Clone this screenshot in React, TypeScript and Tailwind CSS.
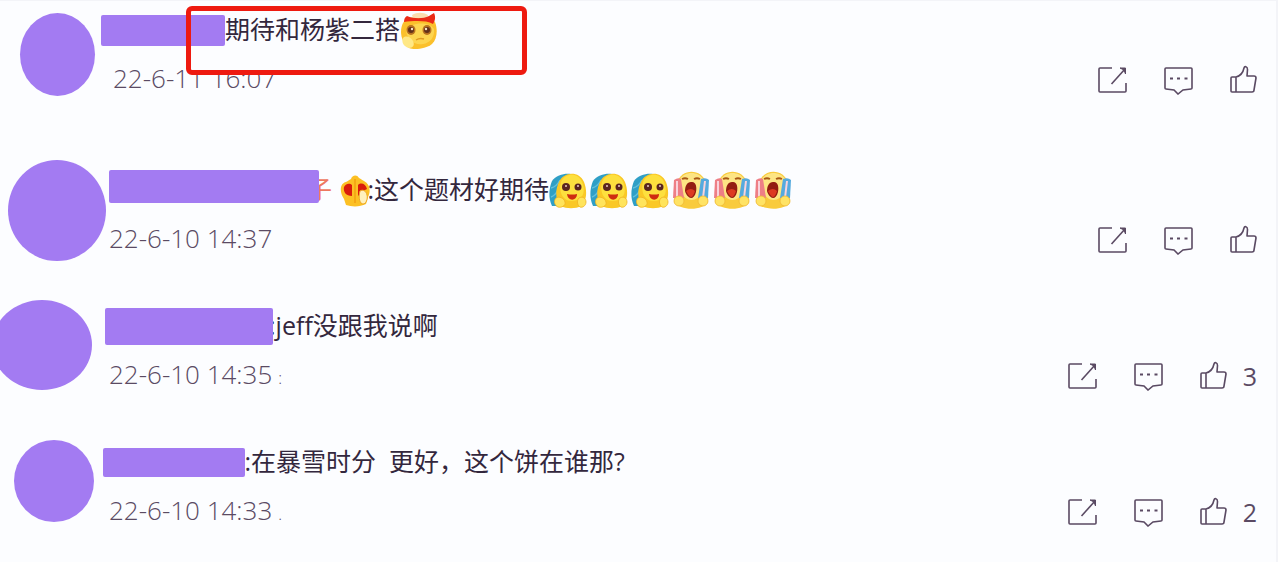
import type { ReactNode } from "react";

interface Comment {
  id: number;
  avatar: string;
  column: string;
  mask: string;
  date: string;
  dateIndent: string;
  name?: ReactNode;
  text: string;
  emojis: ReactNode[];
  trail?: string;
  likes?: number;
  highlighted?: boolean;
}

function HeadbandFace() {
  return (
    <svg viewBox="0 0 38 38" className="size-[38px] shrink-0" aria-hidden="true">
      <path d="M3 12C8 4 29 4 35 11c3 8 2 17-3 22-6 5-18 6-23 4C1 31-1 20 3 12Z" fill="#fbc02c" />
      <path d="M6 20c4-9 23-10 28-2 1 8-4 14-11 15-8 2-16-5-17-13Z" fill="#fdd550" />
      <path d="M12 4c5-3 11-3 16 0l-1 3H13Z" fill="#fbdcae" />
      <path d="M4 11c0-3 1-5 3-6 7 3 16 3 22 0l5-3c2 4 1 8-1 11-7-4-20-3-29-2Z" fill="#ea2a16" />
      <ellipse cx="11" cy="19" rx="4.500" ry="5" fill="#b8711f" />
      <ellipse cx="27" cy="19" rx="4.500" ry="5" fill="#b8711f" />
      <circle cx="11" cy="19" r="3" fill="#62301a" />
      <circle cx="27" cy="19" r="3" fill="#62301a" />
      <circle cx="12" cy="18" r="1.200" fill="#f9e4c8" />
      <circle cx="26" cy="18" r="1.200" fill="#f9e4c8" />
      <path d="M16 29c3-2 5-2 8-1" stroke="#e09a20" strokeWidth="1.500" fill="none" />
      <path d="M3 27c3-3 8-1 10 3s0 7-4 7c-5-1-8-6-6-10Z" fill="#ffe886" />
    </svg>
  );
}

function HeartHands() {
  return (
    <svg viewBox="0 0 30 33" className="h-[33px] w-[30px] shrink-0" aria-hidden="true">
      <path d="M4 25C-1 18 0 9 6 8c2-1 3-2 5-3 1-4 6-5 8-1 2 1 3 2 5 3 6 3 7 10 4 16l-2 7c-6 3-14 3-20 1Z" fill="#fcc024" />
      <path d="M12 11v11C6 22 3 18 4 13c2-4 6-4 8-2Z" fill="#d91c0b" />
      <path d="M18 11c3-3 8-1 9 4l-4 2-5 5Z" fill="#d91c0b" />
      <path d="M15 5v24" stroke="#f5a716" strokeWidth="2" fill="none" />
      <path d="M20 17c3-2 6 0 7 4s-1 9-4 9-5-6-3-13Z" fill="#fff1bd" stroke="#efaa25" />
    </svg>
  );
}

function HopefulFace() {
  return (
    <svg viewBox="0 0 38 38" className="size-[38px] shrink-0" aria-hidden="true">
      <path d="M3 10C7 4 16 2 22 3L16 35H3C-1 27 0 17 3 10Z" fill="#2f9fc6" />
      <path d="M2 17c4-1 7-4 9-8M2 26c3-1 5-3 7-7" stroke="#63bfda" strokeWidth="1.500" fill="none" />
      <path d="M10 11C14 1 30-1 35 11c4 10 2 20-3 24-5 3-15 3-20 0C6 29 6 19 10 11Z" fill="#fac827" />
      <path d="M12 11C16 2 29 1 33 11c4 9 1 16-5 18-8 3-14-1-16-7-1-4-1-7 0-11Z" fill="#fde03e" />
      <circle cx="17" cy="16" r="4" fill="#5a2520" />
      <circle cx="29" cy="16" r="3.500" fill="#5a2520" />
      <circle cx="17" cy="15" r="1" fill="#e9c9c4" />
      <circle cx="29" cy="15" r="1" fill="#e9c9c4" />
      <path d="M18 23q5 1 10 0c0 7-9 8-10 0Z" fill="#cf2c10" />
      <path d="M7 27c3-2 8 0 9 4s-4 6-7 5-5-6-2-9Z" fill="#ffe45c" stroke="#efb321" strokeWidth="0.800" />
      <path d="M30 27c3-2 7 0 7 4s-4 6-6 5-4-6-1-9Z" fill="#ffe45c" stroke="#efb321" strokeWidth="0.800" />
    </svg>
  );
}

function ScreamingFace() {
  return (
    <svg viewBox="0 0 38 38" className="size-[38px] shrink-0" aria-hidden="true">
      <path d="M5 12C9-3 30-3 34 12l2 19c-5 9-28 9-34 0Z" fill="#f9cb3c" />
      <path d="M8 8c5-8 18-8 23 0l-1 12c-4 12-17 12-21 0Z" fill="#fde584" />
      <path d="M2 9q4-3 7-1l3 19H1Z" fill="#ee7f86" />
      <path d="M29 8q5-2 8 1l-1 18H26Z" fill="#55aade" />
      <path d="M5 10v17M33 10l-2 17" stroke="#f9d3dc" strokeWidth="2" />
      <path d="M10 8c2-1 4-1 6 0M22 8c2-1 4-1 6 0" stroke="#a95916" strokeWidth="1.800" fill="none" />
      <path d="M19 11c5-1 6 5 5 10-1 4-3 6-5 6s-5-3-6-7c0-5 2-9 6-9Z" fill="#931d12" />
      <path d="M14 20q5-4 9 0-2 6-4 6t-5-6Z" fill="#dc3a22" />
      <circle cx="7" cy="30" r="5" fill="#ffe365" stroke="#efb833" strokeWidth="0.800" />
      <circle cx="31" cy="30" r="5" fill="#ffe365" stroke="#efb833" strokeWidth="0.800" />
    </svg>
  );
}

function ShareIcon() {
  return (
    <svg viewBox="0 0 30 30" className="size-[30px]" fill="none" stroke="currentColor" strokeWidth="1.600">
      <path d="M15 3H3q-1 0-1 1v22q0 1 1 1h25q1 0 1-1v-8" />
      <path d="M14.500 19 28 4" />
      <path d="M23 3h5.500v6L27 5Z" fill="currentColor" strokeWidth="1" />
    </svg>
  );
}

function ReplyIcon() {
  return (
    <svg viewBox="0 0 30 30" className="size-[30px]" fill="none" stroke="currentColor" strokeWidth="1.600">
      <path d="M3 3h25q1 0 1 1v19q0 1-1 1l-8 1-5 4-4-4-8-1q-1 0-1-1V4q0-1 1-1Z" />
      <path d="M7 13.500h3M14 13.500h3M21.500 13.500h3" strokeWidth="2" />
    </svg>
  );
}

function LikeIcon() {
  return (
    <svg viewBox="0 0 28 30" className="h-[30px] w-[28px]" fill="none" stroke="currentColor" strokeWidth="1.600" strokeLinejoin="round">
      <path d="M3 12q-1 0-1 1v13q0 1 1 1h4V12ZM7 12c4-1 7-4 8-9 .5-2 3.500-2 3.500 1.500L18 11h7q2 0 2 2l-2 12q0 2-2 2H7" />
    </svg>
  );
}

const comments: Comment[] = [
  {
    id: 1,
    avatar: "ml-5 mt-[13px] h-[83px] w-[75px]",
    column: "w-[101px]",
    mask: "h-[31px] w-[124px]",
    date: "22-6-11 16:07",
    dateIndent: "pl-3",
    text: "期待和杨紫二搭",
    emojis: [<HeadbandFace key="a" />],
    highlighted: true,
  },
  {
    id: 2,
    avatar: "ml-2 h-[101px] w-[98px]",
    column: "w-[109px]",
    mask: "mb-2 h-[33px] w-[210px]",
    date: "22-6-10 14:37",
    dateIndent: "pl-0",
    name: (
      <>
        <span className="-ml-3 mr-2 text-[#ee7860]">子</span>
        <HeartHands />
        <span className="flex w-1 justify-end">:</span>
      </>
    ),
    text: "这个题材好期待",
    emojis: [
      <HopefulFace key="a" />,
      <HopefulFace key="b" />,
      <HopefulFace key="c" />,
      <ScreamingFace key="d" />,
      <ScreamingFace key="e" />,
      <ScreamingFace key="f" />,
    ],
  },
  {
    id: 3,
    avatar: "-ml-2 mt-1 h-[90px] w-[100px]",
    column: "w-[105px]",
    mask: "h-[37px] w-[168px]",
    date: "22-6-10 14:35",
    dateIndent: "pl-1",
    name: <span className="-ml-1">:</span>,
    text: "jeff没跟我说啊",
    emojis: [],
    trail: ":",
    likes: 3,
  },
  {
    id: 4,
    avatar: "ml-[14px] mt-2 h-[82px] w-[80px]",
    column: "w-[103px]",
    mask: "h-[29px] w-[142px]",
    date: "22-6-10 14:33",
    dateIndent: "pl-1.5",
    name: <span className="flex w-1.5 justify-end">:</span>,
    text: "在暴雪时分  更好，这个饼在谁那?",
    emojis: [],
    trail: ".",
    likes: 2,
  },
];

function CommentRow({ comment }: { comment: Comment }) {
  return (
    <li className={comment.highlighted ? "relative flex h-40" : "flex h-[136px]"}>
      <div className={`shrink-0 ${comment.column}`}>
        <div className={`rounded-[50%] bg-[#a37bf2] ${comment.avatar}`} />
      </div>
      <div className="flex-1">
        <div className="flex h-[60px] items-center whitespace-pre text-[25px] font-normal text-[#33273d]">
          <div className={`z-10 shrink-0 rounded-xs bg-[#a37bf2] ${comment.mask}`} />
          {comment.name}
          <p>{comment.text}</p>
          <div className="flex gap-[3px]">{comment.emojis}</div>
        </div>
        <div className="flex h-10 items-center text-[#5a4a63]">
          <time className={`pb-1 text-[26px] ${comment.dateIndent}`}>{comment.date}</time>
          {comment.trail && <span className="pl-1.5 pt-1 text-base">{comment.trail}</span>}
          <div className="ml-auto flex items-center gap-9 pr-[19px]">
            <button type="button" aria-label="转发">
              <ShareIcon />
            </button>
            <button type="button" aria-label="回复">
              <ReplyIcon />
            </button>
            <button type="button" aria-label="赞" className="flex items-center gap-4">
              <LikeIcon />
              {comment.likes && <span className="text-[25px] font-normal leading-[30px]">{comment.likes}</span>}
            </button>
          </div>
        </div>
      </div>
      {comment.highlighted && (
        <div className="absolute left-[186px] top-[6px] z-20 h-[69px] w-[341px] rounded-md border-5 border-[#ee1a10]" />
      )}
    </li>
  );
}

export default function App() {
  return (
    <main className="overflow-hidden border-t border-r-2 border-[#f3f4f8] bg-[#fcfdff] font-['Open_Sans','Noto_Sans_CJK_SC',sans-serif] font-light">
      <ul className="-mt-px">
        {comments.map((comment) => (
          <CommentRow key={comment.id} comment={comment} />
        ))}
      </ul>
    </main>
  );
}
